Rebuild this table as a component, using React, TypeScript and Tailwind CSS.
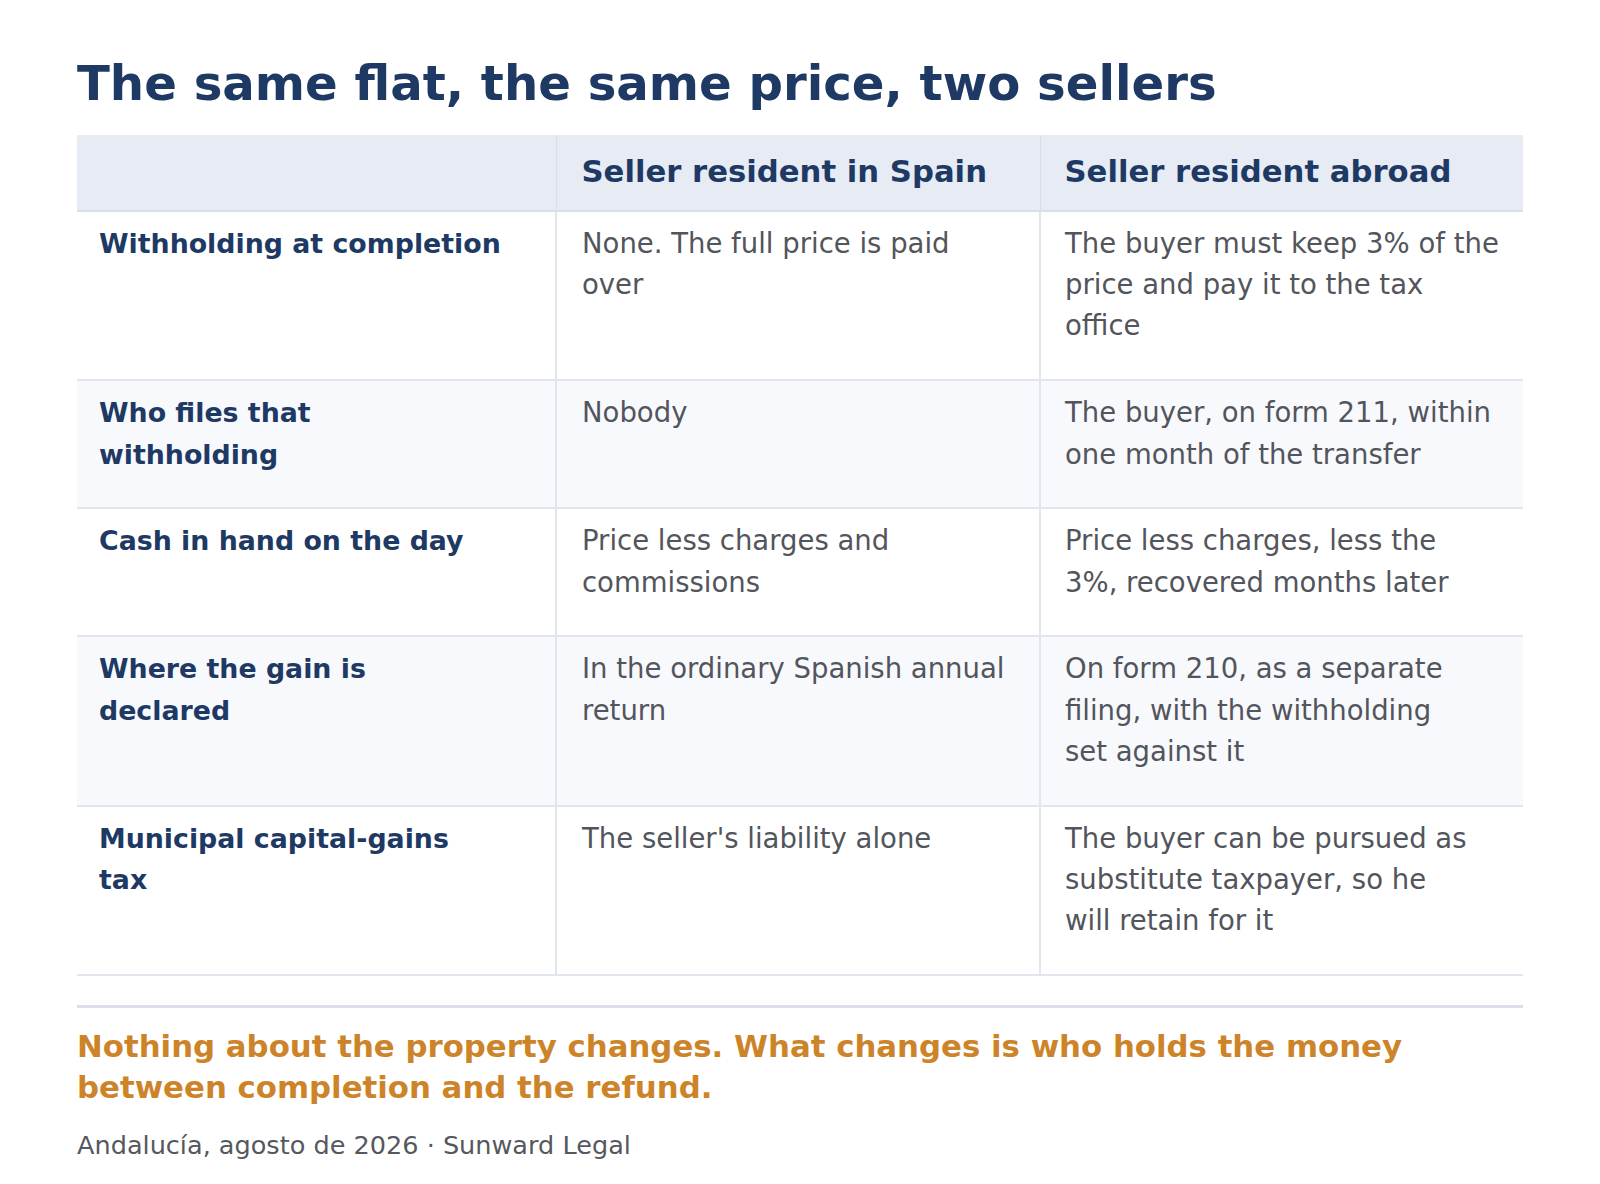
const rows = [
  {
    label: ["Withholding at completion"],
    spain: ["None. The full price is paid", "over"],
    abroad: ["The buyer must keep 3% of the", "price and pay it to the tax", "office"],
  },
  {
    label: ["Who files that", "withholding"],
    spain: ["Nobody"],
    abroad: ["The buyer, on form 211, within", "one month of the transfer"],
  },
  {
    label: ["Cash in hand on the day"],
    spain: ["Price less charges and", "commissions"],
    abroad: ["Price less charges, less the", "3%, recovered months later"],
  },
  {
    label: ["Where the gain is", "declared"],
    spain: ["In the ordinary Spanish annual", "return"],
    abroad: ["On form 210, as a separate", "filing, with the withholding", "set against it"],
  },
  {
    label: ["Municipal capital-gains", "tax"],
    spain: ["The seller's liability alone"],
    abroad: ["The buyer can be pursued as", "substitute taxpayer, so he", "will retain for it"],
  },
];

function Lines({ lines }: { lines: string[] }) {
  return (
    <>
      {lines.map((line, i) => (
        <span key={i} className="block whitespace-nowrap">
          {line}
        </span>
      ))}
    </>
  );
}

export default function App() {
  return (
    <div className="min-h-screen bg-white px-[77px] pt-[55px] pb-10 font-['DejaVu_Sans',sans-serif]">
      <h1 className="mb-[22px] text-[48.2px] font-bold leading-[1.2] text-[#1e3a64]">
        The same flat, the same price, two sellers
      </h1>

      <table className="w-full table-fixed border-collapse">
        <thead>
          <tr className="bg-[#e6ebf4]">
            <th className="w-[479px] border-b-2 border-[#d9dfea] px-6 py-[14.5px]" />
            <th className="w-[484px] border-b-2 border-l border-[#d9dfea] pl-[25px] pr-6 py-[14.5px] text-left text-[30.7px] font-bold leading-[1.5] text-[#1e3a64]">
              Seller resident in Spain
            </th>
            <th className="border-b-2 border-l border-[#d9dfea] pl-6 pr-5 py-[14.5px] text-left text-[30.7px] font-bold leading-[1.5] text-[#1e3a64]">
              Seller resident abroad
            </th>
          </tr>
        </thead>
        <tbody>
          {rows.map((row, i) => (
            <tr key={row.label.join(" ")} className={i % 2 === 1 ? "bg-[#f8f9fc]" : "bg-white"}>
              <td className="border-b-2 border-[#e1e5ee] px-[22px] pt-[11px] pb-[32.5px] align-top text-[26.8px] font-bold leading-[41.3px] text-[#1e3a64]">
                <Lines lines={row.label} />
              </td>
              <td className="border-b-2 border-l-2 border-[#e1e5ee] pl-[25px] pr-6 pt-[11px] pb-[32.5px] align-top text-[27.5px] leading-[41.3px] text-[#52555c]">
                <Lines lines={row.spain} />
              </td>
              <td className="border-b-2 border-l-2 border-[#e1e5ee] pl-6 pr-5 pt-[11px] pb-[32.5px] align-top text-[27.5px] leading-[41.3px] text-[#52555c]">
                <Lines lines={row.abroad} />
              </td>
            </tr>
          ))}
        </tbody>
      </table>

      <div className="mt-[29px] border-t-[3px] border-[#dbe0ea]" />

      <p className="mt-[18px] text-[30.8px] font-bold leading-[41px] text-[#cd8429]">
        Nothing about the property changes. What changes is who holds the money between completion and the refund.
      </p>

      <p className="mt-[18px] text-[25.55px] leading-[1.5] text-[#55585e]">
        Andalucía, agosto de 2026 · Sunward Legal
      </p>
    </div>
  );
}
